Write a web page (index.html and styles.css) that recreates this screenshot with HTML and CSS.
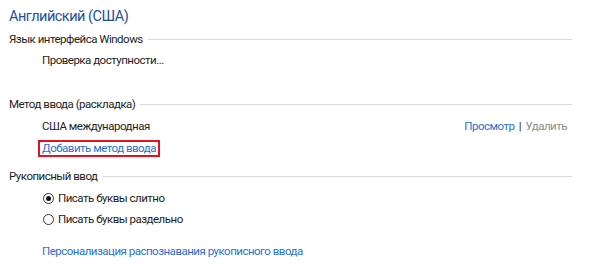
FILE: index.html
```html
<!DOCTYPE html>
<html lang="ru">
<head>
  <meta charset="UTF-8">
  <title>Английский (США)</title>
  <link rel="stylesheet" href="styles.css">
</head>
<body>
  <main class="page">
    <h1 class="title">Английский (США)</h1>

    <section class="group">
      <div class="group-head"><span>Язык интерфейса Windows</span><span class="rule"></span></div>
      <p class="item item--first">Проверка доступности...</p>
    </section>

    <section class="group group--spaced">
      <div class="group-head"><span>Метод ввода (раскладка)</span><span class="rule"></span></div>
      <div class="item item--row">
        <span>США международная</span>
        <span class="actions"><a href="#" class="link">Просмотр</a> <span class="sep">|</span> <span class="disabled">Удалить</span></span>
      </div>
      <p class="item item--link"><a href="#" class="link boxed">Добавить метод ввода</a></p>
    </section>

    <section class="group group--hand">
      <div class="group-head"><span>Рукописный ввод</span><span class="rule"></span></div>
      <label class="item radio"><span class="dot dot--on"></span>Писать буквы слитно</label>
      <label class="item radio radio--second"><span class="dot"></span>Писать буквы раздельно</label>
      <p class="item item--last"><a href="#" class="link">Персонализация распознавания рукописного ввода</a></p>
    </section>
  </main>
</body>
</html>
```

FILE: styles.css
```css
body {
  margin: 0;
  font-family: Roboto, 'Noto Sans', sans-serif;
  font-size: 11.5px;
  letter-spacing: -0.5px;
  color: #1e1e1e;
  background: #fff;
}
.page {
  padding: 7px 28px 0 9px;
}
.title {
  margin: 0;
  font-size: 14.5px;
  letter-spacing: -0.5px;
  font-weight: normal;
  line-height: 20px;
  color: #1e4fa3;
}
.group-head {
  display: flex;
  align-items: center;
  line-height: 20px;
  margin-top: 2px;
}
.rule {
  flex: 1;
  height: 1px;
  margin-left: 5px;
  background: #dadada;
}
.group--spaced {
  margin-top: 24px;
}
.group--hand {
  margin-top: 8px;
}
.item {
  margin: 2px 0 0;
  padding-left: 33px;
  line-height: 20px;
}
.item--first {
  margin-top: 1px;
}
.item--row {
  display: flex;
  justify-content: space-between;
  padding-right: 5px;
}
.actions {
  color: #6d6d6d;
}
.sep {
  color: #1e1e1e;
  padding: 0 2px;
}
.disabled {
  color: #8a8a8a;
}
.link {
  color: #2a6fd6;
  text-decoration: none;
}
.item--link {
  padding-left: 29px;
}
.boxed {
  display: inline-block;
  line-height: 13px;
  padding: 0 2px;
  border: 2px solid #e8101a;
}
.radio {
  display: flex;
  align-items: center;
  padding-left: 34px;
}
.radio--second {
  margin-top: 1px;
}
.dot {
  width: 9px;
  height: 9px;
  border: 1px solid #333;
  border-radius: 50%;
  margin-right: 4px;
  position: relative;
}
.dot--on::after {
  content: "";
  position: absolute;
  left: 2px;
  top: 2px;
  width: 5px;
  height: 5px;
  border-radius: 50%;
  background: #111;
}
.item--last {
  margin-top: 12px;
}
```
